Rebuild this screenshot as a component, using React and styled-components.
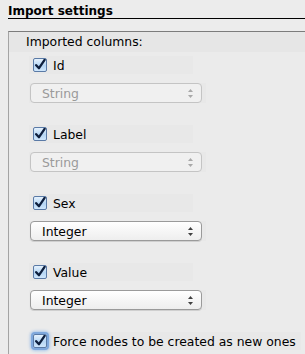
import React from "react";
import styled, { createGlobalStyle } from "styled-components";

const GlobalStyle = createGlobalStyle`
  html, body {
    margin: 0;
    padding: 0;
    background: #ececec;
  }
  body {
    font-family: "DejaVu Sans", "Liberation Sans", sans-serif;
    font-size: 12.4px;
    color: #000;
  }
`;

const columns = [
  { name: "Id", type: "String", disabled: true },
  { name: "Label", type: "String", disabled: true },
  { name: "Sex", type: "Integer", disabled: false },
  { name: "Value", type: "Integer", disabled: false },
];

function CheckMark() {
  return (
    <svg width="12" height="12" viewBox="0 0 12 12">
      <path
        d="M2.2 6.2 L5 9.2 L10.6 0.8"
        fill="none"
        stroke="#0e1f3d"
        strokeWidth="2.3"
        strokeLinecap="round"
        strokeLinejoin="round"
      />
    </svg>
  );
}

function Arrows({ disabled }) {
  const c = disabled ? "#a8a8a8" : "#404040";
  return (
    <svg width="7" height="11" viewBox="0 0 7 11">
      <path d="M3.5 1 L6 4 L1 4 Z" fill={c} />
      <path d="M3.5 10 L6 7 L1 7 Z" fill={c} />
    </svg>
  );
}

export default function App() {
  return (
    <Page>
      <GlobalStyle />
      <Title>Import settings</Title>
      <Panel>
        <PanelHeader>Imported columns:</PanelHeader>
        <Groups>
          {columns.map((col) => (
            <Group key={col.name}>
              <CheckRow>
                <Box>
                  <CheckMark />
                </Box>
                <span>{col.name}</span>
              </CheckRow>
              <SelectWrap>
                <Select $disabled={col.disabled}>
                  <span>{col.type}</span>
                  <Arrows disabled={col.disabled} />
                </Select>
              </SelectWrap>
            </Group>
          ))}
          <ForceRow>
            <Box $focus>
              <CheckMark />
            </Box>
            <span>Force nodes to be created as new ones</span>
          </ForceRow>
        </Groups>
      </Panel>
    </Page>
  );
}

const Page = styled.div`
  width: 305px;
  height: 354px;
  overflow: hidden;
  background: #ececec;
`;
const Title = styled.div`
  margin-left: 8px;
  height: 18px;
  line-height: 22px;
  font-weight: bold;
  font-size: 12px;
  border-bottom: 1px solid #000;
  box-sizing: content-box;
`;
const Panel = styled.div`
  margin: 12px 0 0 8px;
  border-top: 1px solid #7c7c7c;
  border-left: 1px solid #a4a4a4;
  background: #ebebeb;
  height: 400px;
`;
const PanelHeader = styled.div`
  height: 20px;
  line-height: 20px;
  padding-left: 17px;
  background: #e6e6e6;
`;
const Groups = styled.div`
  display: flex;
  flex-direction: column;
  gap: 22px;
  padding-top: 4px;
`;
const Group = styled.div`
  display: flex;
  flex-direction: column;
  gap: 9px;
`;
const CheckRow = styled.div`
  display: flex;
  align-items: center;
  gap: 6px;
  height: 18px;
  margin-left: 20px;
  padding-left: 4px;
  width: 160px;
  background: #e8e8e8;
`;
const ForceRow = styled(CheckRow)`
  width: 268px;
  gap: 6px;
`;
const Box = styled.div`
  width: 12px;
  height: 12px;
  border: 1px solid #5a7aa6;
  border-radius: 2px;
  background: linear-gradient(#e6f2fd, #b6d6f4 55%, #cfe6fb);
  display: flex;
  align-items: center;
  justify-content: center;
  flex: none;
  box-shadow: ${(p) => (p.$focus ? "0 0 0 2px #7fa8dc, 0 0 3px 3px #a9c6ea" : "none")};
`;
const SelectWrap = styled.div`
  margin-left: 20px;
  width: 176px;
  background: #e8e8e8;
  padding: 0 0 0 1px;
`;
const Select = styled.div`
  box-sizing: border-box;
  width: 172px;
  height: 20px;
  border: 1px solid ${(p) => (p.$disabled ? "#c4c4c4" : "#9a9a9a")};
  border-radius: 4px;
  background: ${(p) =>
    p.$disabled ? "#f0f0f0" : "linear-gradient(#ffffff, #f6f6f6 50%, #eeeeee)"};
  color: ${(p) => (p.$disabled ? "#9a9a9a" : "#000")};
  display: flex;
  align-items: center;
  justify-content: space-between;
  padding: 0 7px 0 11px;
  box-shadow: ${(p) => (p.$disabled ? "none" : "0 1px 0 #cfcfcf")};
`;
